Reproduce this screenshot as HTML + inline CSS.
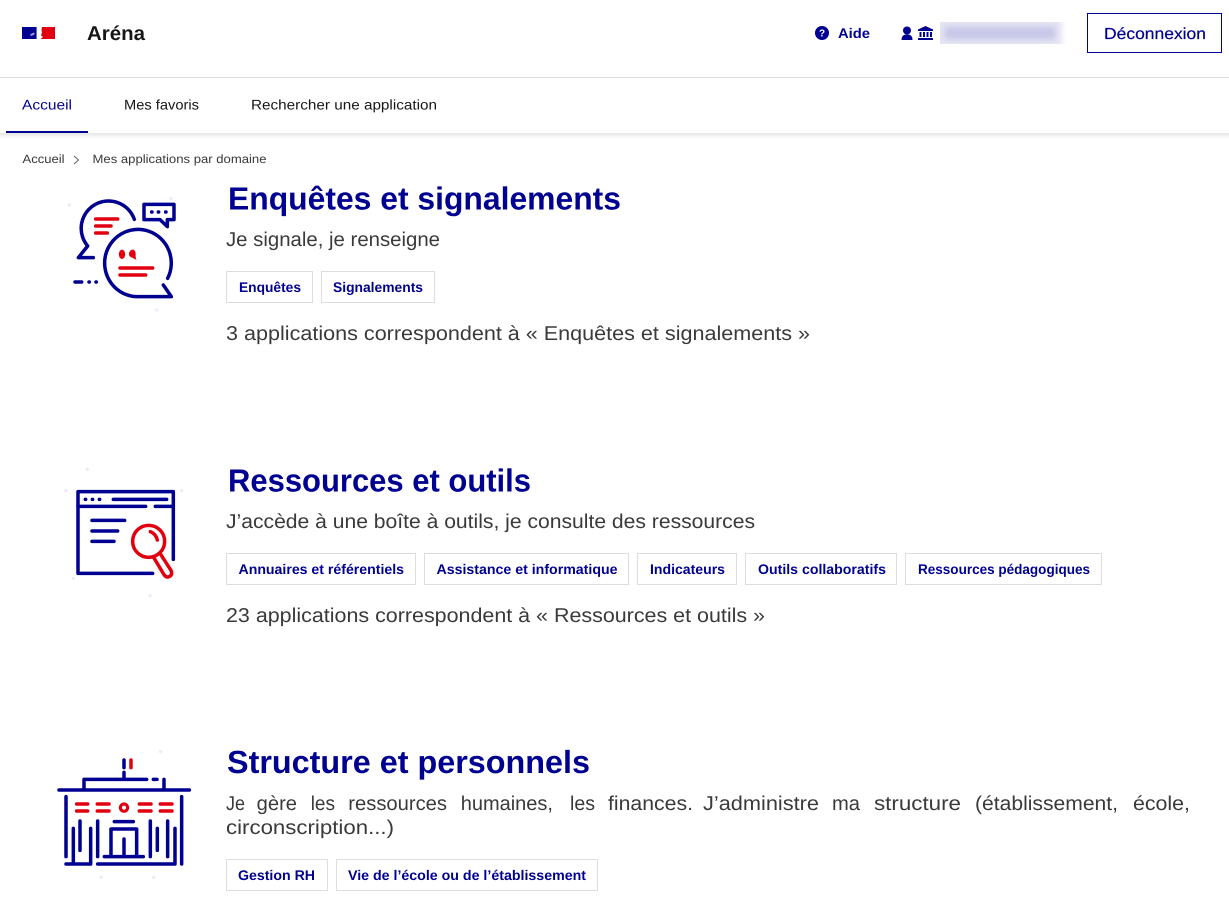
<!DOCTYPE html>
<html lang="fr">
<head>
<meta charset="utf-8">
<title>Aréna</title>
<style>
html,body{margin:0;padding:0;background:#fff;width:1229px;height:905px;overflow:hidden}
svg{display:block;position:absolute;left:0;top:0}
text{font-family:"Liberation Sans",sans-serif;white-space:pre}
.h{font-size:32px;font-weight:700;fill:#000091}
.s{font-size:20px;fill:#3a3a3a}
.t{font-size:14px;font-weight:700;fill:#000091}
.n{font-size:14px;fill:#161616}
.b{font-size:12px;fill:#3a3a3a}
.tag{fill:#fff;stroke:#ddd;stroke-width:1}
.ib{fill:none;stroke:#000091;stroke-width:10.500;stroke-linecap:round;stroke-linejoin:round}
.ir{fill:none;stroke:#e1000f;stroke-width:10.500;stroke-linecap:round;stroke-linejoin:round}
.fd{fill:#ecebfb}
</style>
</head>
<body>
<svg width="1229" height="905" viewBox="0 0 1229 905" xmlns="http://www.w3.org/2000/svg" text-rendering="geometricPrecision">
<defs>
<filter id="bl" x="-10%" y="-60%" width="120%" height="220%"><feGaussianBlur stdDeviation="3"/></filter>
<clipPath id="cb"><rect x="940" y="22" width="127" height="22"/></clipPath>
<linearGradient id="sh" x1="0" y1="0" x2="0" y2="1"><stop offset="0" stop-color="#000" stop-opacity=".1"/><stop offset="1" stop-color="#000" stop-opacity="0"/></linearGradient>
</defs>

<!-- header -->
<rect x="22" y="27" width="14.600" height="12" fill="#000091"/>
<path d="M42 27H55V39H40.500L43 37 41 35.500 42 32.500 41.500 30Z" fill="#e1000f"/>
<path d="M30 35c1-1.500 3-2 4-2.500l.8 1-1.300 1.500-2 1z" fill="#9a9ad8"/>
<text x="87" y="40" font-size="20" font-weight="700" fill="#161616" textLength="58" lengthAdjust="spacingAndGlyphs">Aréna</text>

<circle cx="822" cy="33" r="7" fill="#000091"/>
<text x="822" y="36.500" font-size="10" font-weight="700" fill="#fff" text-anchor="middle">?</text>
<text x="838" y="38" class="t" textLength="32" lengthAdjust="spacingAndGlyphs">Aide</text>
<circle cx="907" cy="30.500" r="4" fill="#000091"/>
<path d="M901.500 40c0-4 2-5.500 5.500-5.500s5.500 1.500 5.500 5.500z" fill="#000091"/>
<path d="M925.500 26l7.500 3.500v1.500h-15v-1.500z" fill="#000091"/>
<path d="M919.500 32h2v5h-2zM923 32h2v5h-2zM926.500 32h2v5h-2zM930 32h2v5h-2zM918 38h15v2h-15z" fill="#000091"/>
<g clip-path="url(#cb)">
<rect x="934" y="18" width="128" height="30" fill="#e3e3f3" filter="url(#bl)"/>
<rect x="945" y="27" width="110" height="12" fill="#c6c6e8" filter="url(#bl)"/>
</g>
<rect x="1087.500" y="13.500" width="134" height="39" fill="#fff" stroke="#000091"/>
<text x="1104" y="39" font-size="16" fill="#000091" font-weight="400" stroke="#000091" stroke-width=".2" textLength="102" lengthAdjust="spacingAndGlyphs">Déconnexion</text>

<rect x="0" y="77" width="1229" height="1" fill="#ddd"/>

<!-- nav -->
<rect x="0" y="133" width="1229" height="6" fill="url(#sh)"/>
<text x="22" y="109.500" class="n" style="fill:#000091" textLength="50" lengthAdjust="spacingAndGlyphs">Accueil</text>
<text x="124" y="109.500" class="n" textLength="75" lengthAdjust="spacingAndGlyphs">Mes favoris</text>
<text x="251" y="109.500" class="n" textLength="186" lengthAdjust="spacingAndGlyphs">Rechercher une application</text>
<rect x="6" y="131" width="82" height="2" fill="#000091"/>

<!-- breadcrumb -->
<text x="22.500" y="163" class="b" textLength="42" lengthAdjust="spacingAndGlyphs">Accueil</text>
<path d="M74 156l4.500 4-4.500 4" fill="none" stroke="#666" stroke-width="1.100"/>
<text x="92.500" y="163" class="b" textLength="174" lengthAdjust="spacingAndGlyphs">Mes applications par domaine</text>

<!-- section 1 -->
<text x="228" y="209.500" class="h" textLength="393" lengthAdjust="spacingAndGlyphs">Enquêtes et signalements</text>
<text x="226" y="246" class="s" textLength="214" lengthAdjust="spacingAndGlyphs">Je signale, je renseigne</text>
<rect class="tag" x="226.500" y="271.500" width="86" height="31"/>
<text x="239" y="292" class="t" textLength="62" lengthAdjust="spacingAndGlyphs">Enquêtes</text>
<rect class="tag" x="321.500" y="271.500" width="113" height="31"/>
<text x="333" y="292" class="t" textLength="90" lengthAdjust="spacingAndGlyphs">Signalements</text>
<text x="226" y="340" class="s" textLength="584" lengthAdjust="spacingAndGlyphs">3 applications correspondent à « Enquêtes et signalements »</text>

<g transform="translate(50 185) scale(.3333)">
<circle class="fd" cx="58" cy="60" r="5"/><circle class="fd" cx="363" cy="40" r="5"/><circle class="fd" cx="320" cy="375" r="5"/>
<path class="ib" d="M253 103A82 82 0 1 0 113 183L85 218H130"/>
<path class="ib" d="M353 280A100 101 0 1 0 258 335H364L340 300"/>
<path class="ib" d="M282 58H372V104H352V125L330 104H282Z"/>
<path class="ib" d="M75 291H95M117 291h1M138 291h1"/>
<path class="ib" d="M305 81h1M325 81h1M347 81h1"/>
<path class="ir" d="M137 102H203M137 123H183M137 144H172M210 249H308M210 270H287"/>
<ellipse cx="216" cy="208" rx="9.500" ry="14" fill="#e1000f"/>
<path d="M248 194c-6 0-11 6-11 13 0 6 4 9 9 11l14 7c-4-6-3-12-3-18 0-8-4-13-9-13z" fill="#e1000f"/>
</g>

<!-- section 2 -->
<text x="228" y="491.500" class="h" textLength="303" lengthAdjust="spacingAndGlyphs">Ressources et outils</text>
<text x="226" y="528" class="s" textLength="529" lengthAdjust="spacingAndGlyphs">J’accède à une boîte à outils, je consulte des ressources</text>
<rect class="tag" x="226.500" y="553.500" width="189" height="31"/>
<text x="238.500" y="574" class="t" textLength="165.500" lengthAdjust="spacingAndGlyphs">Annuaires et référentiels</text>
<rect class="tag" x="424.500" y="553.500" width="204" height="31"/>
<text x="436.500" y="574" class="t" textLength="181" lengthAdjust="spacingAndGlyphs">Assistance et informatique</text>
<rect class="tag" x="637.500" y="553.500" width="99" height="31"/>
<text x="650" y="574" class="t" textLength="75" lengthAdjust="spacingAndGlyphs">Indicateurs</text>
<rect class="tag" x="745.500" y="553.500" width="151" height="31"/>
<text x="758" y="574" class="t" textLength="128" lengthAdjust="spacingAndGlyphs">Outils collaboratifs</text>
<rect class="tag" x="905.500" y="553.500" width="196" height="31"/>
<text x="918" y="574" class="t" textLength="172" lengthAdjust="spacingAndGlyphs">Ressources pédagogiques</text>
<text x="226" y="622" class="s" textLength="539" lengthAdjust="spacingAndGlyphs">23 applications correspondent à « Ressources et outils »</text>

<g transform="translate(50 470) scale(.3333)">
<circle class="fd" cx="48" cy="62" r="5"/><circle class="fd" cx="395" cy="62" r="5"/><circle class="fd" cx="70" cy="325" r="5"/><circle class="fd" cx="300" cy="377" r="5"/><circle class="fd" cx="112" cy="-2" r="5"/>
<path class="ib" d="M308 310H84V65H370V268"/>
<path class="ib" d="M84 109H287M316 109H370M190 88H350M106 88h1M127 88h1M148 88h1M126 151H224M126 183H203M126 214H192"/>
<circle class="ir" cx="296" cy="214" r="48"/>
<path class="ir" d="M301 185Q318 192 322 210"/>
<path class="ir" d="M312 264L342 314Q350 326 361 318Q369 310 361 298L330 250"/>
</g>

<!-- section 3 -->
<text x="227" y="773" class="h" textLength="363" lengthAdjust="spacingAndGlyphs">Structure et personnels</text>
<text class="s" x="226" y="810" textLength="19" lengthAdjust="spacingAndGlyphs">Je</text>
<text class="s" x="256.700" y="810" textLength="40.300" lengthAdjust="spacingAndGlyphs">gère</text>
<text class="s" x="310.700" y="810" textLength="24.300" lengthAdjust="spacingAndGlyphs">les</text>
<text class="s" x="348.300" y="810" textLength="98.700" lengthAdjust="spacingAndGlyphs">ressources</text>
<text class="s" x="460.700" y="810" textLength="92.300" lengthAdjust="spacingAndGlyphs">humaines,</text>
<text class="s" x="570" y="810" textLength="25" lengthAdjust="spacingAndGlyphs">les</text>
<text class="s" x="608" y="810" textLength="85" lengthAdjust="spacingAndGlyphs">finances.</text>
<text class="s" x="703" y="810" textLength="116" lengthAdjust="spacingAndGlyphs">J’administre</text>
<text class="s" x="832" y="810" textLength="28" lengthAdjust="spacingAndGlyphs">ma</text>
<text class="s" x="874" y="810" textLength="87" lengthAdjust="spacingAndGlyphs">structure</text>
<text class="s" x="975" y="810" textLength="143" lengthAdjust="spacingAndGlyphs">(établissement,</text>
<text class="s" x="1133" y="810" textLength="57" lengthAdjust="spacingAndGlyphs">école,</text>
<text x="226" y="834" class="s" textLength="168" lengthAdjust="spacingAndGlyphs">circonscription...)</text>
<rect class="tag" x="226.500" y="859.500" width="101" height="31"/>
<text x="238" y="880" class="t" textLength="77" lengthAdjust="spacingAndGlyphs">Gestion RH</text>
<rect class="tag" x="336.500" y="859.500" width="261" height="31"/>
<text x="348" y="880" class="t" textLength="238" lengthAdjust="spacingAndGlyphs">Vie de l’école ou de l’établissement</text>

<g transform="translate(45 745) scale(.3333)">
<circle class="fd" cx="347" cy="20" r="5"/><circle class="fd" cx="168" cy="397" r="5"/><circle class="fd" cx="326" cy="397" r="5"/>
<path class="ib" d="M42 135H433M117 130V103H305M325 103H336M357 103V130M237 45V68M237 82V100"/>
<path class="ib" d="M63 155V335M410 155V357M105 228V316M85 250V357M137 250V357M158 228V335M316 228V335M337 250V316M368 228V335M390 250V357M63 357H137M158 357H390"/>
<path class="ib" d="M208 230H265M198 335V252H275V335M237 282V335M178 335H295"/>
<path class="ir" d="M258 45V68M95 177H128M95 198H128M157 177H192M157 198H192M283 177H318M283 198H318M346 177H381M346 198H381"/>
<circle cx="237" cy="188" r="11" fill="none" stroke="#e1000f" stroke-width="9.500"/>
</g>
</svg>
</body>
</html>
